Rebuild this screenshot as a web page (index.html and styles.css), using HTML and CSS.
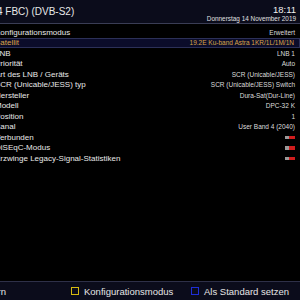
FILE: index.html
```html
<!DOCTYPE html>
<html lang="de">
<head>
<meta charset="utf-8">
<link rel="stylesheet" href="styles.css">
</head>
<body>
<div class="screen">
  <header class="header">
    <div class="title">4 FBC) (DVB-S2)</div>
    <div class="clock">
      <div class="time">18:11</div>
      <div class="date">Donnerstag 14 November 2019</div>
    </div>
  </header>
  <ul class="list">
    <li class="row"><span class="label">Konfigurationsmodus</span><span class="value">Erweitert</span></li>
    <li class="row selected"><span class="label">Satellit</span><span class="value">19.2E Ku-band Astra 1KR/1L/1M/1N</span></li>
    <li class="row"><span class="label">LNB</span><span class="value">LNB 1</span></li>
    <li class="row"><span class="label">Priorität</span><span class="value">Auto</span></li>
    <li class="row"><span class="label">Art des LNB / Geräts</span><span class="value">SCR (Unicable/JESS)</span></li>
    <li class="row"><span class="label">SCR (Unicable/JESS) typ</span><span class="value">SCR (Unicable/JESS) Switch</span></li>
    <li class="row"><span class="label">Hersteller</span><span class="value">Dura-Sat(Dur-Line)</span></li>
    <li class="row"><span class="label">Modell</span><span class="value">DPC-32 K</span></li>
    <li class="row"><span class="label">Position</span><span class="value">1</span></li>
    <li class="row"><span class="label">Kanal</span><span class="value">User Band 4 (2040)</span></li>
    <li class="row"><span class="label">Verbunden</span><span class="toggle"><span class="knob"></span><span class="bar"></span></span></li>
    <li class="row"><span class="label">DiSEqC-Modus</span><span class="toggle"><span class="knob"></span><span class="bar"></span></span></li>
    <li class="row"><span class="label">Erzwinge Legacy-Signal-Statistiken</span><span class="toggle"><span class="knob"></span><span class="bar"></span></span></li>
  </ul>
  <footer class="buttons">
    <div class="btn first"><span class="btn-text">Speichern</span></div>
    <div class="btn yellow"><span class="key key-yellow"></span><span class="btn-text">Konfigurationsmodus</span></div>
    <div class="btn blue"><span class="key key-blue"></span><span class="btn-text">Als Standard setzen</span></div>
  </footer>
</div>
</body>
</html>
```

FILE: styles.css
```css
html, body {
  margin: 0;
  padding: 0;
  background: #000;
}
.screen {
  width: 300px;
  height: 300px;
  overflow: hidden;
  background: #000;
  display: flex;
  flex-direction: column;
  font-family: "Liberation Sans", Arial, sans-serif;
  color: #e6e6e6;
}
.header {
  height: 23px;
  flex: none;
  background: #0b0c1b;
  border-bottom: 1px solid #3a3d55;
  display: flex;
  justify-content: space-between;
  align-items: flex-start;
}
.title {
  font-size: 10px;
  line-height: 12px;
  margin-top: 6px;
  margin-left: -3px;
  white-space: nowrap;
  color: #e8e8e8;
}
.clock {
  display: flex;
  flex-direction: column;
  align-items: flex-end;
  padding-right: 4px;
  padding-top: 5px;
}
.time {
  font-size: 9.5px;
  line-height: 10px;
  color: #f0f0f0;
}
.date {
  font-size: 6.4px;
  line-height: 7px;
  color: #e0e0e0;
}
.list {
  list-style: none;
  margin: 3px 0 0 0;
  padding: 0;
  flex: 1;
}
.row {
  height: 10.5px;
  display: flex;
  justify-content: space-between;
  align-items: center;
  box-sizing: border-box;
  padding-right: 5px;
}
.label {
  font-size: 8px;
  margin-left: -5px;
  white-space: nowrap;
  color: #e8e8e8;
}
.value {
  font-size: 6.5px;
  white-space: nowrap;
  color: #dcdcdc;
}
.row.selected {
  background: #0b0c2a;
  border: 1px solid #2c3058;
  border-left: none;
}
.row.selected .label,
.row.selected .value {
  color: #dca548;
}
.toggle {
  display: flex;
  width: 10px;
  height: 3.5px;
}
.knob {
  width: 3.5px;
  background: #9a9a9a;
}
.bar {
  flex: 1;
  background: #cf1c1c;
}
.buttons {
  height: 18px;
  flex: none;
  background: #0b0c1b;
  border-top: 1px solid #2e3048;
  display: flex;
  align-items: center;
}
.btn {
  display: flex;
  align-items: center;
  font-size: 9.5px;
  white-space: nowrap;
  color: #e6e6e6;
}
.btn.first {
  width: 40px;
  margin-left: -34px;
  justify-content: flex-end;
}
.btn.yellow {
  margin-left: 65px;
  width: 120px;
}
.key {
  width: 8px;
  height: 8px;
  box-sizing: border-box;
  margin-right: 5px;
}
.key-yellow {
  border: 1.5px solid #d6ba10;
}
.key-blue {
  border: 1.5px solid #1e2ed6;
}
```
